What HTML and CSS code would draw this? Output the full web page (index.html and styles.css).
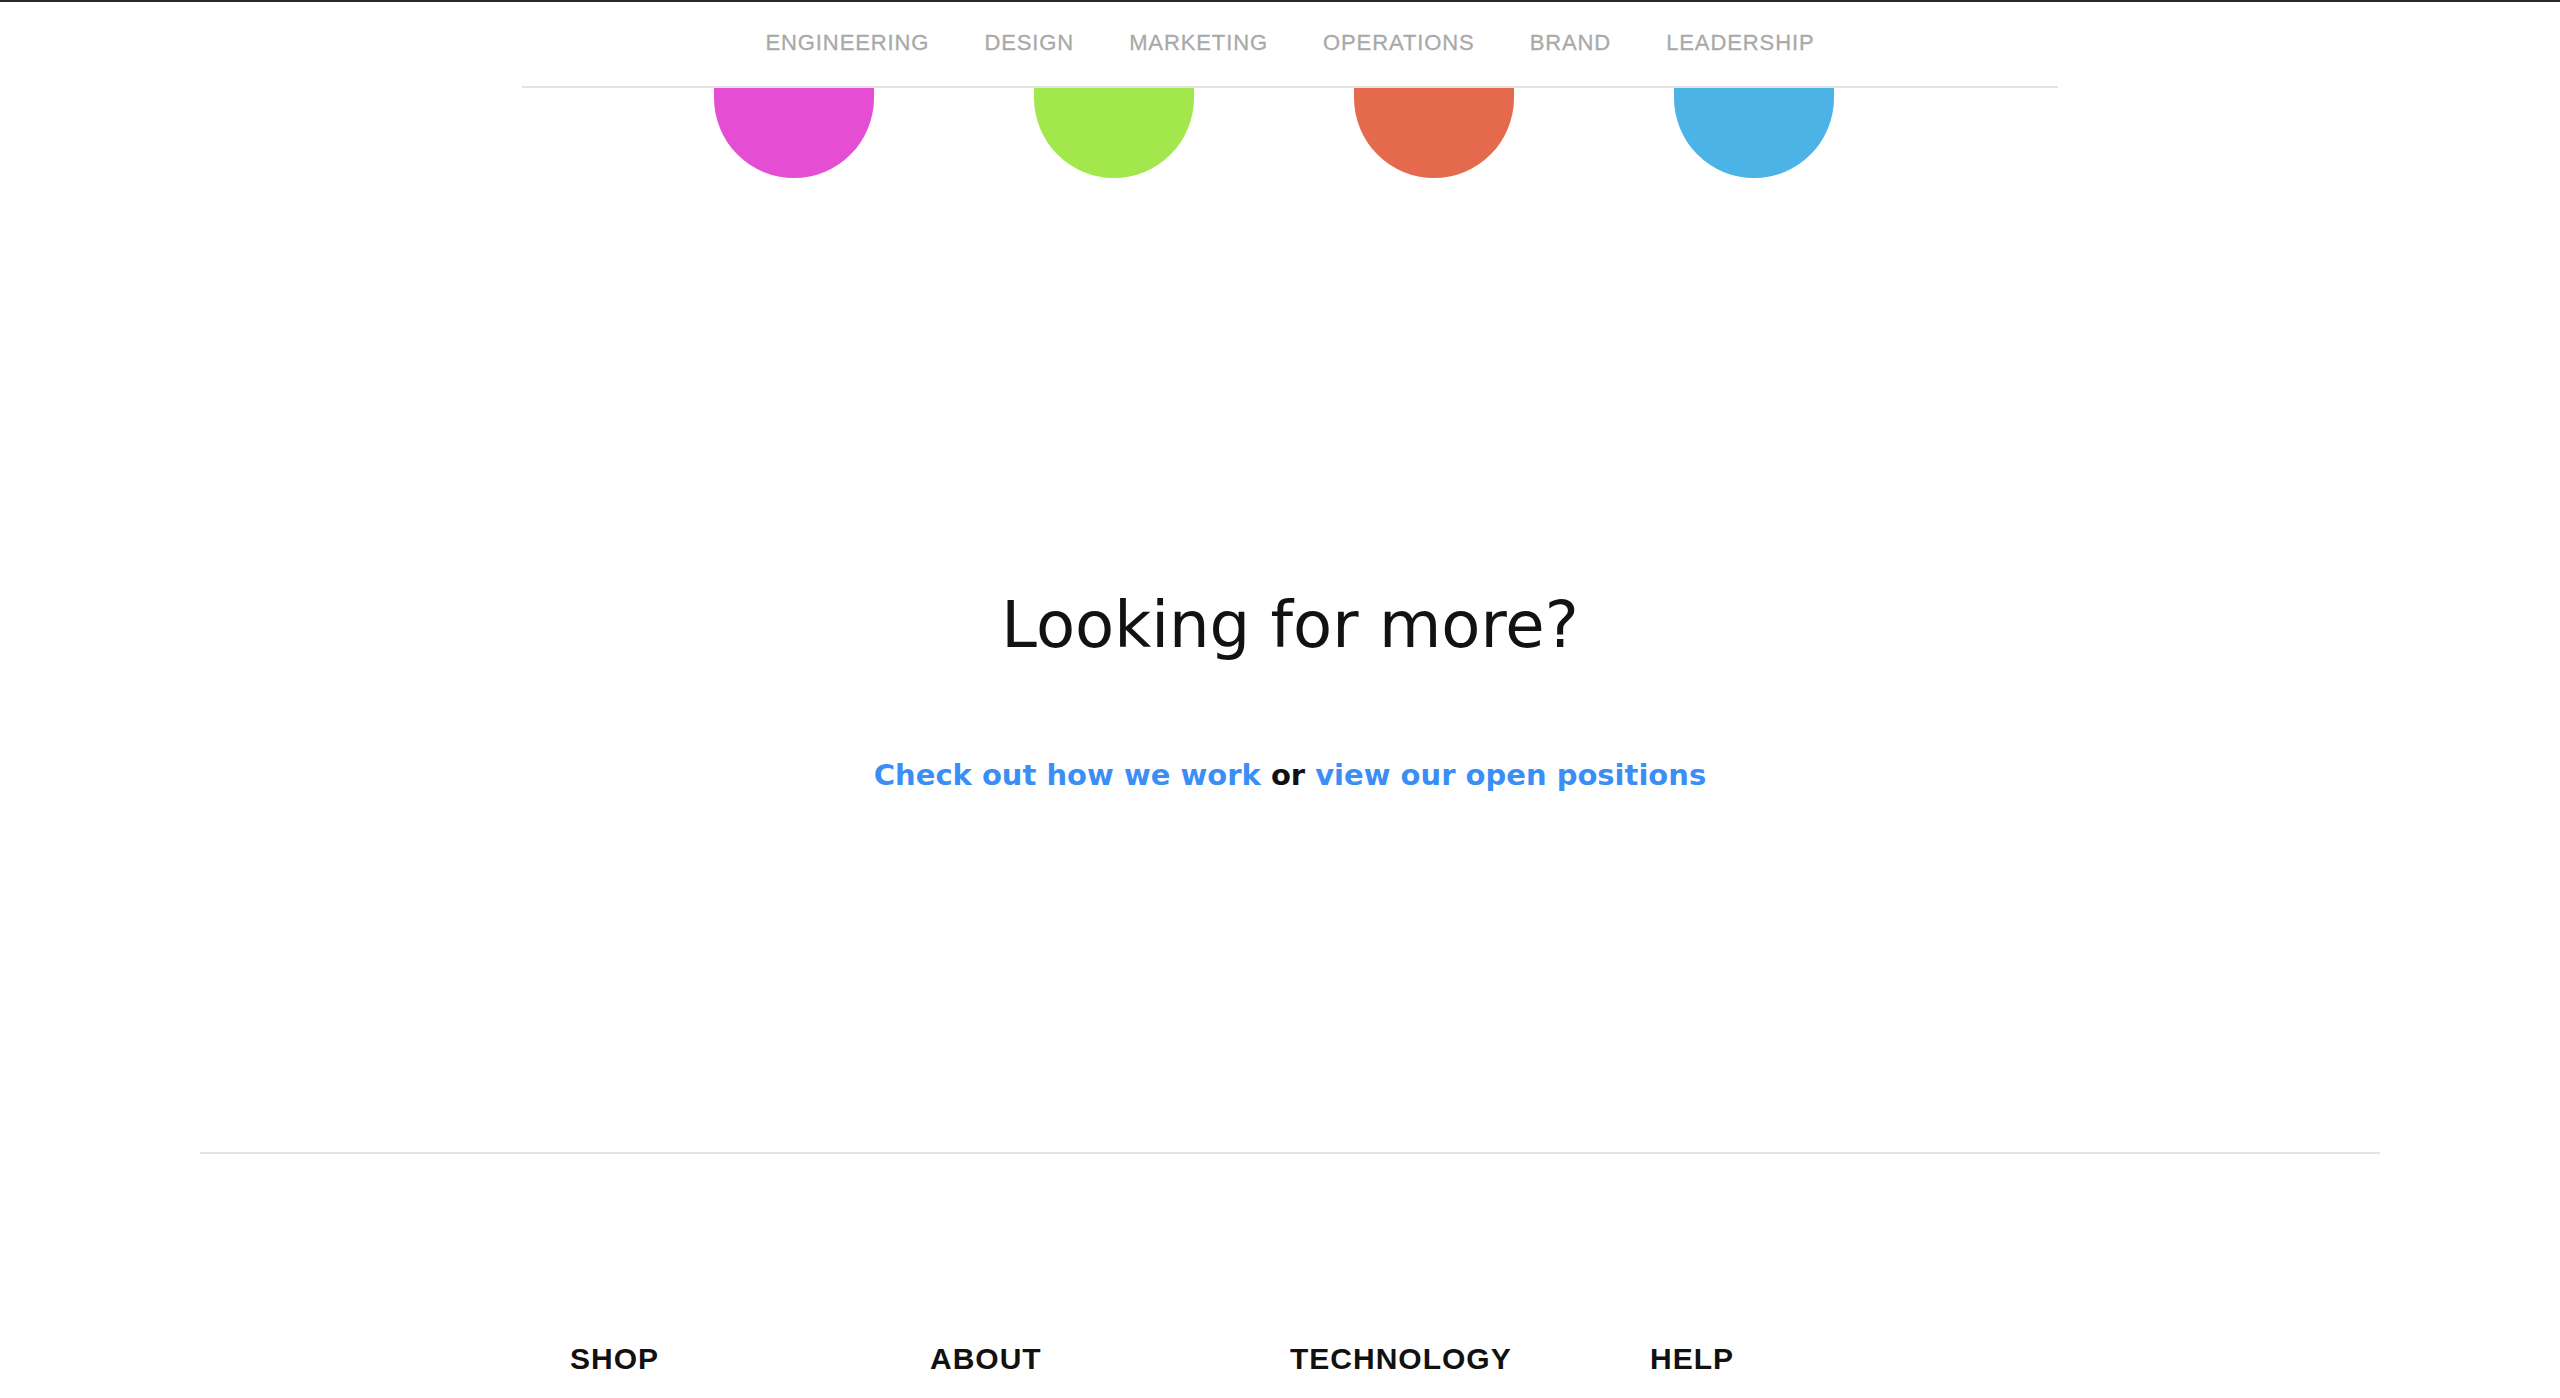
FILE: index.html
```html
<!DOCTYPE html>
<html lang="en">
<head>
<meta charset="utf-8">
<title>Looking for more?</title>
<link rel="stylesheet" href="styles.css">
</head>
<body>
<div class="page">
  <nav class="teams">
    <a class="team-link" href="#">ENGINEERING</a>
    <a class="team-link" href="#">DESIGN</a>
    <a class="team-link" href="#">MARKETING</a>
    <a class="team-link" href="#">OPERATIONS</a>
    <a class="team-link" href="#">BRAND</a>
    <a class="team-link" href="#">LEADERSHIP</a>
  </nav>
  <div class="dots">
    <span class="dot dot-pink"></span>
    <span class="dot dot-green"></span>
    <span class="dot dot-orange"></span>
    <span class="dot dot-blue"></span>
  </div>
  <section class="more">
    <h2 class="more-title">Looking for more?</h2>
    <p class="more-links"><a class="blue-link" href="#">Check out how we work</a> or <a class="blue-link" href="#">view our open positions</a></p>
  </section>
</div>
<footer class="footer">
  <div class="footer-cols">
    <div class="footer-col"><h3 class="footer-head">SHOP</h3></div>
    <div class="footer-col"><h3 class="footer-head">ABOUT</h3></div>
    <div class="footer-col"><h3 class="footer-head">TECHNOLOGY</h3></div>
    <div class="footer-col"><h3 class="footer-head">HELP</h3></div>
  </div>
</footer>
</body>
</html>
```
FILE: styles.css
```css
html, body {
  margin: 0;
  padding: 0;
  background: #ffffff;
}
body {
  border-top: 2px solid #2a2a2a;
  padding-left: 20px;
  font-family: "Liberation Sans", Arial, sans-serif;
  color: #111111;
  overflow: hidden;
}
.page {
  width: 2180px;
  margin: 0 auto;
}
.teams {
  width: 1536px;
  margin: 0 auto;
  box-sizing: border-box;
  padding: 28px 0 30px;
  border-bottom: 2px solid #e4e4e4;
  display: flex;
  justify-content: center;
  gap: 55px;
}
.team-link {
  font-family: "Liberation Sans", Arial, sans-serif;
  font-size: 22px;
  line-height: 26px;
  letter-spacing: 0.9px;
  color: #a9a9a9;
  text-decoration: none;
  -webkit-text-stroke: 0.3px #a9a9a9;
}
.dots {
  width: 1536px;
  margin: 0 auto;
  box-sizing: border-box;
  padding-left: 192px;
  display: flex;
  gap: 160px;
}
.dot {
  display: block;
  width: 160px;
  height: 90px;
  border-radius: 0 0 80px 80px / 0 0 80px 80px;
}
.dot-pink { background: #e54dd2; }
.dot-green { background: #a2e84c; }
.dot-orange { background: #e5694d; }
.dot-blue { background: #4bb3e5; }
.more {
  text-align: center;
  padding-top: 407px;
}
.more-title {
  margin: 0;
  font-family: "DejaVu Sans", sans-serif;
  font-weight: normal;
  font-size: 64px;
  line-height: 80px;
  color: #121212;
}
.more-links {
  margin: 90px 0 0;
  font-family: "DejaVu Sans", sans-serif;
  font-weight: bold;
  font-size: 29px;
  line-height: 40px;
  color: #111111;
}
.blue-link {
  color: #3b8ef6;
  text-decoration: none;
}
.footer {
  width: 2180px;
  margin: 357px auto 0;
  border-top: 2px solid #e4e4e4;
  padding-top: 187px;
  padding-bottom: 80px;
}
.footer-cols {
  width: 1440px;
  margin: 0 auto;
  display: grid;
  grid-template-columns: repeat(4, 360px);
}
.footer-head {
  margin: 0;
  font-family: "Liberation Sans", Arial, sans-serif;
  font-weight: bold;
  font-size: 30px;
  line-height: 36px;
  letter-spacing: 1px;
  color: #111111;
}
```
